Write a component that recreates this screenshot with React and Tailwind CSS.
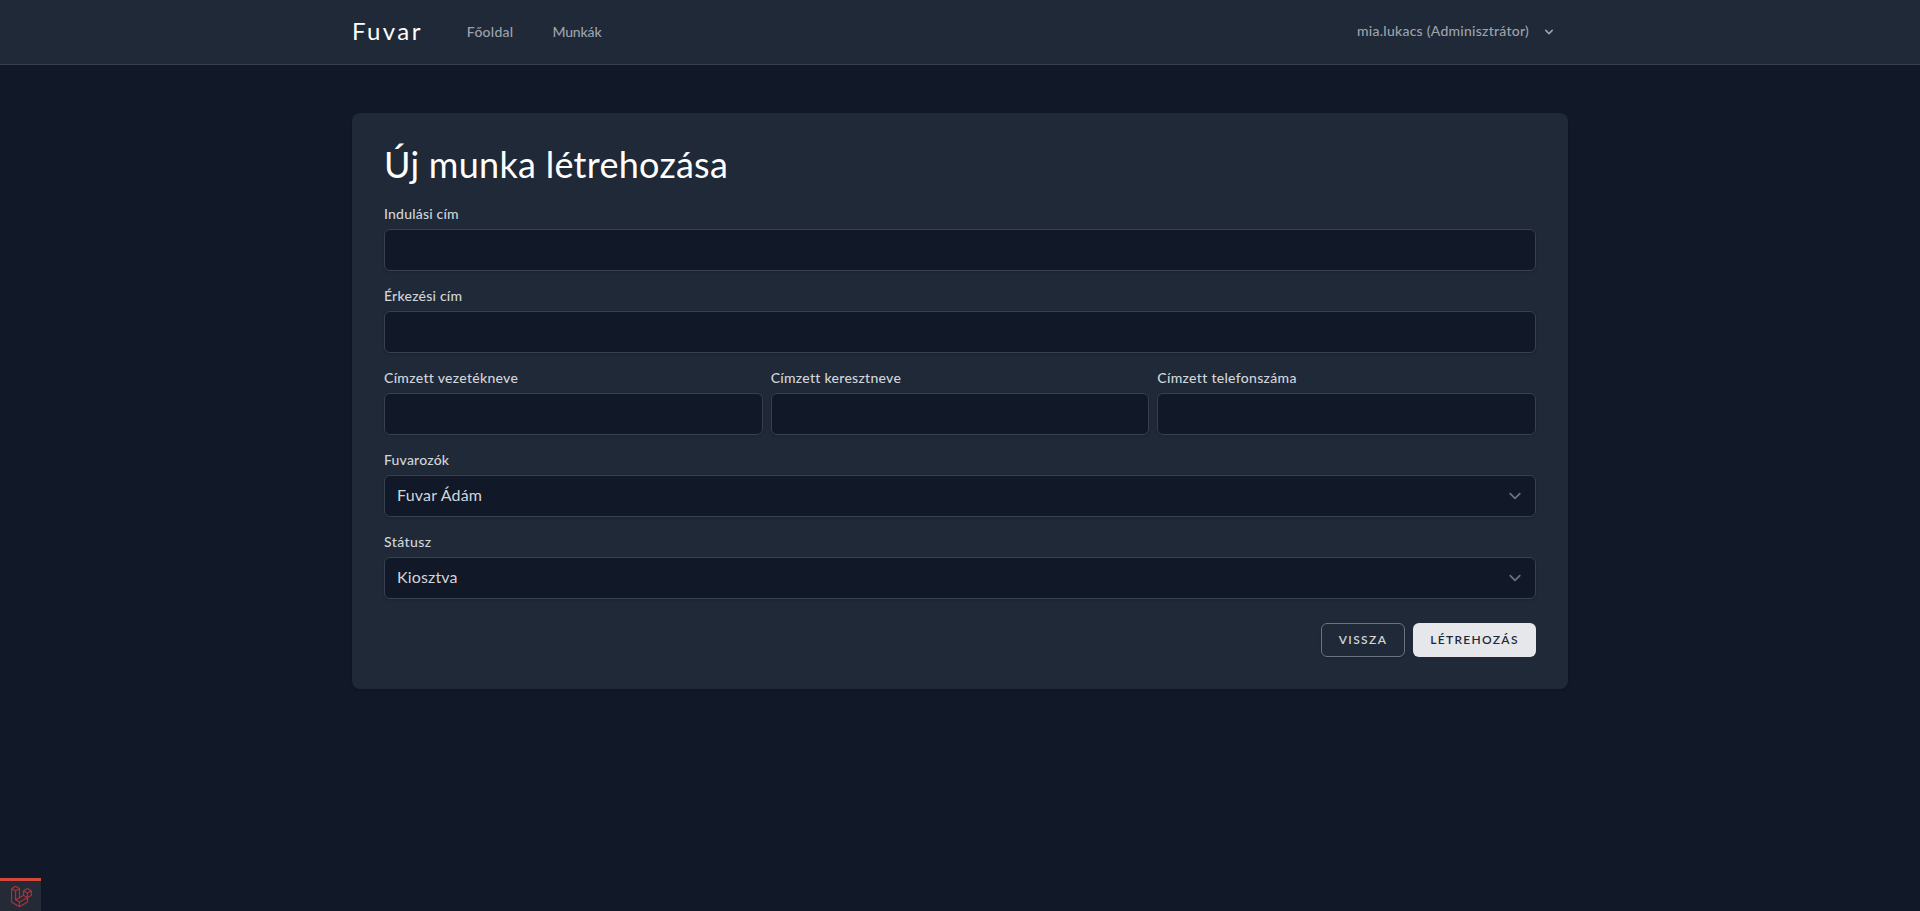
import React from "react";
import { SiLaravel } from "react-icons/si";

function NavChevron() {
  return (
    <svg className="size-4 fill-current" viewBox="0 0 20 20">
      <path
        fillRule="evenodd"
        clipRule="evenodd"
        d="M5.293 7.293a1 1 0 011.414 0L10 10.586l3.293-3.293a1 1 0 111.414 1.414l-4 4a1 1 0 01-1.414 0l-4-4a1 1 0 010-1.414z"
      />
    </svg>
  );
}

function Label({ text, className }) {
  return (
    <label className="block h-5 text-sm leading-[18px] font-medium whitespace-nowrap text-[#d1d5db]">
      <span className={className}>{text}</span>
    </label>
  );
}

function TextField({ label, className }) {
  return (
    <div className="min-w-0 flex-1">
      <Label text={label} className={className} />
      <input
        type="text"
        className="mt-1 block h-[42px] w-full rounded-md border border-[#374151] bg-[#111827] px-3 text-[#d1d5db] shadow-sm"
      />
    </div>
  );
}

function SelectField({ label, className, value, valueClassName }) {
  return (
    <div>
      <Label text={label} className={className} />
      <button
        type="button"
        className="mt-1 flex h-[42px] w-full items-center justify-between rounded-md border border-[#374151] bg-[#111827] pr-2 pl-3 text-base text-[#d1d5db] shadow-sm"
      >
        <span className={valueClassName}>{value}</span>
        <svg className="size-6" viewBox="0 0 20 20" fill="none">
          <path
            stroke="#6b7280"
            strokeLinecap="round"
            strokeLinejoin="round"
            strokeWidth="1.5"
            d="M6 8l4 4 4-4"
          />
        </svg>
      </button>
    </div>
  );
}

export default function App() {
  return (
    <div className="flex h-screen flex-col overflow-hidden bg-[#111827] font-['Lato','Liberation_Sans',sans-serif]">
      <nav className="border-b border-[#374151] bg-[#1f2937]">
        <div className="mx-auto flex h-16 max-w-7xl items-center px-8">
          <a className="pb-0.5 text-2xl tracking-[0.1em] text-white">Fuvar</a>
          <div className="ml-11 flex gap-[39px] text-sm font-medium text-[#9ca3af]">
            <a className="tracking-[0.25px]">Főoldal</a>
            <a className="tracking-[-0.15px]">Munkák</a>
          </div>
          <button
            type="button"
            className="ml-auto flex items-center gap-3 pr-[11px] text-sm font-medium text-[#9ca3af]"
          >
            <span className="pb-0.5 tracking-[0.25px]">mia.lukacs (Adminisztrátor)</span>
            <NavChevron />
          </button>
        </div>
      </nav>

      <main className="mx-auto w-full max-w-7xl flex-1 px-8 pt-12">
        <section className="rounded-lg bg-[#1f2937] p-8 shadow-sm">
          <h1 className="mb-5 h-10 text-4xl leading-[38px] tracking-[0.28px] whitespace-nowrap text-white">
            Új munka létrehozása
          </h1>
          <form className="flex flex-col gap-4">
            <TextField label="Indulási cím" className="tracking-[0.2px]" />
            <TextField label="Érkezési cím" className="tracking-[0.22px]" />
            <div className="flex gap-2">
              <TextField label="Címzett vezetékneve" className="tracking-[0.3px]" />
              <TextField label="Címzett keresztneve" className="tracking-[0.28px]" />
              <TextField label="Címzett telefonszáma" className="tracking-[0.31px]" />
            </div>
            <SelectField
              label="Fuvarozók"
              className="tracking-[0.2px]"
              value="Fuvar Ádám"
              valueClassName="pb-0.5 tracking-[0.2px]"
            />
            <SelectField
              label="Státusz"
              className="tracking-[0.4px]"
              value="Kiosztva"
              valueClassName="pb-0.5 tracking-[0.15px]"
            />
            <div className="mt-2 flex justify-end gap-2 text-xs font-semibold">
              <button
                type="button"
                className="h-[34px] w-[84px] rounded-md border border-[#6b7280] tracking-[1.4px] text-[#d1d5db] uppercase shadow-sm"
              >
                Vissza
              </button>
              <button
                type="button"
                className="h-[34px] w-[123px] rounded-md bg-[#e5e7eb] tracking-[1.3px] text-[#1f2937] uppercase"
              >
                Létrehozás
              </button>
            </div>
          </form>
        </section>
      </main>

      <footer className="flex h-[33px] w-[41px] items-center justify-center border-t-[3px] border-[#d4483b] bg-[#252a37] pl-0.5">
        <SiLaravel className="size-[21px] stroke-[#c8393a] stroke-[0.3px] text-[#c8393a]" />
      </footer>
    </div>
  );
}
